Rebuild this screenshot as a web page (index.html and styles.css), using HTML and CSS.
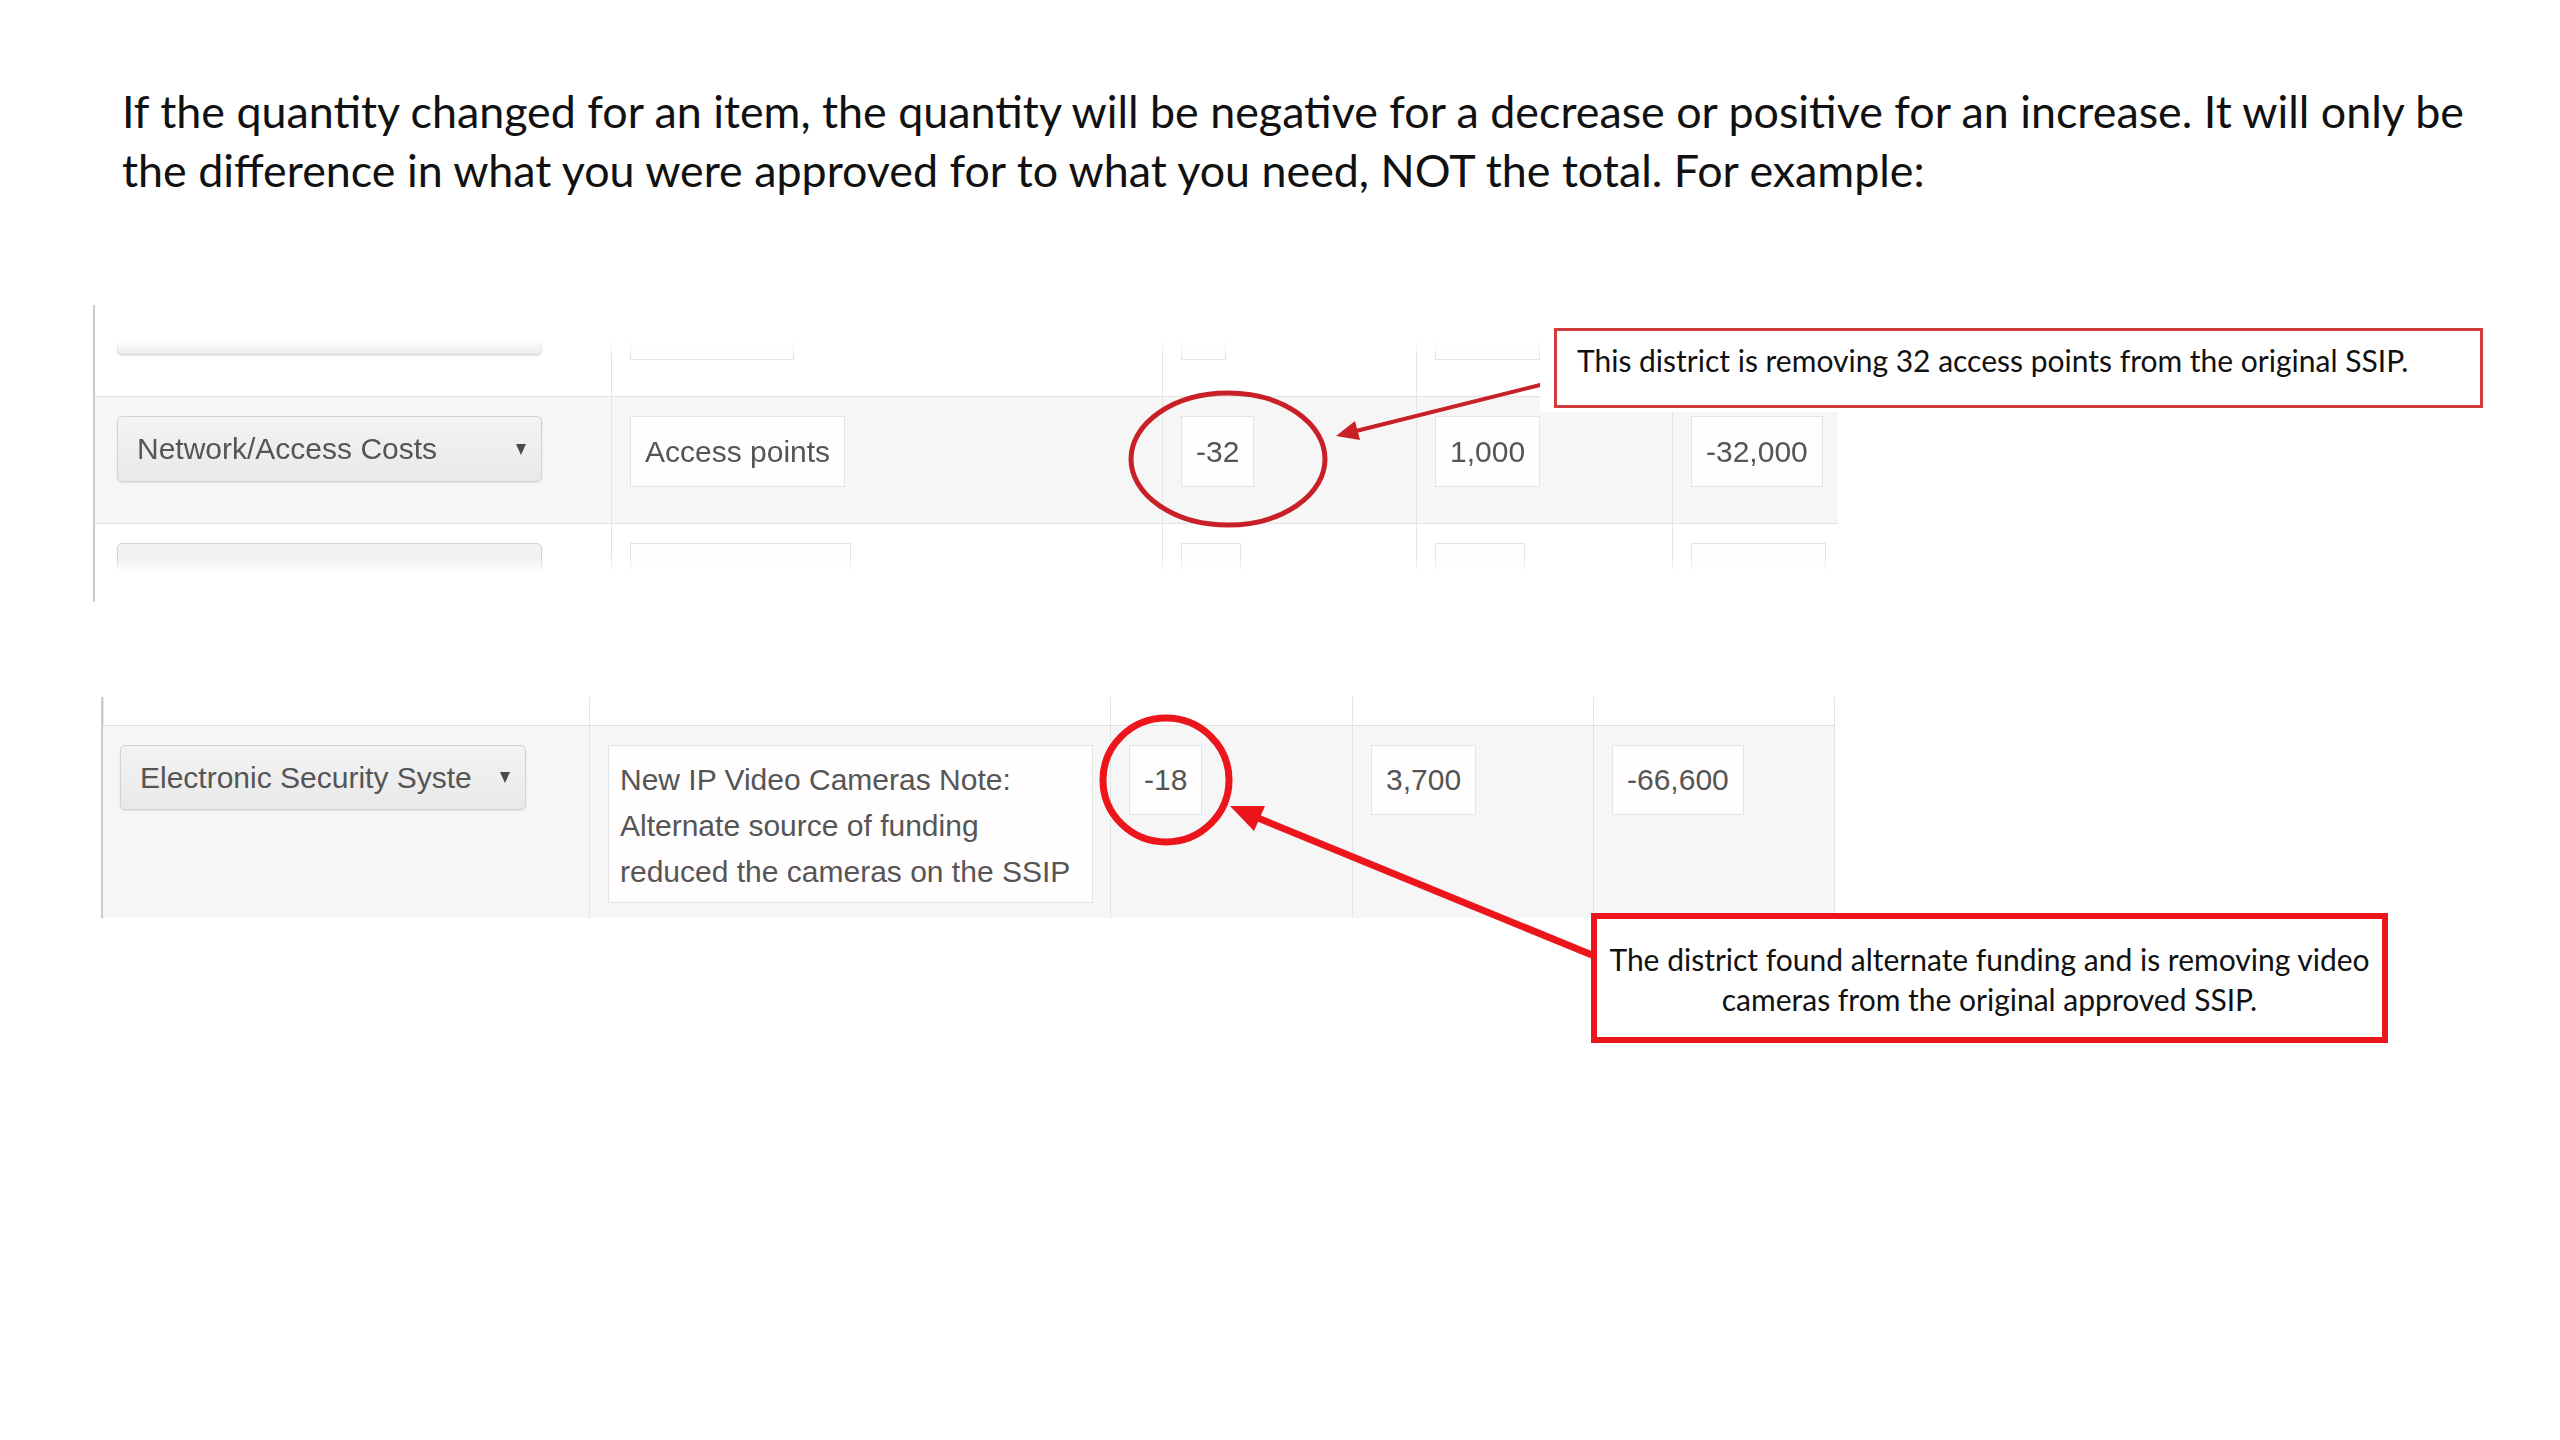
FILE: index.html
```html
<!DOCTYPE html>
<html lang="en">
<head>
    <meta charset="UTF-8">
    <meta name="viewport" content="width=device-width, initial-scale=1.0">
    <title>Quantity changes</title>
    <link rel="stylesheet" href="styles.css">
</head>
<body>
    <div class="slide">
        <p class="intro">If the quantity changed for an item, the quantity will be negative for a decrease or positive for an increase. It will only be<br>the difference in what you were approved for to what you need, NOT the total. For example:</p>

        <!-- first screenshot: access points -->
        <div class="shot shot-one">
            <div class="clip">
                <div class="rows">
                    <div class="row">
                        <div class="cell c1"><div class="select"></div></div>
                        <div class="cell"><div class="field w164"></div></div>
                        <div class="cell"><div class="field w45"></div></div>
                        <div class="cell"><div class="field w105"></div></div>
                        <div class="cell"><div class="field w135"></div></div>
                    </div>
                    <div class="row active">
                        <div class="cell c1"><div class="select"><span class="select-text">Network/Access Costs</span><i class="caret"></i></div></div>
                        <div class="cell"><div class="field">Access points</div></div>
                        <div class="cell"><div class="field">-32</div></div>
                        <div class="cell"><div class="field">1,000</div></div>
                        <div class="cell"><div class="field">-32,000</div></div>
                    </div>
                    <div class="row">
                        <div class="cell c1"><div class="select"></div></div>
                        <div class="cell"><div class="field w221"></div></div>
                        <div class="cell"><div class="field w60"></div></div>
                        <div class="cell"><div class="field w90"></div></div>
                        <div class="cell"><div class="field w135"></div></div>
                    </div>
                </div>
            </div>
        </div>

        <!-- second screenshot: video cameras -->
        <div class="shot shot-two">
            <div class="row head">
                <div class="cell"></div>
                <div class="cell"></div>
                <div class="cell"></div>
                <div class="cell"></div>
                <div class="cell"></div>
            </div>
            <div class="row active">
                <div class="cell c1"><div class="select"><span class="select-text">Electronic Security Syste</span><i class="caret"></i></div></div>
                <div class="cell"><div class="note-field">New IP Video Cameras Note:<br>Alternate source of funding<br>reduced the cameras on the SSIP</div></div>
                <div class="cell"><div class="field">-18</div></div>
                <div class="cell"><div class="field">3,700</div></div>
                <div class="cell"><div class="field">-66,600</div></div>
            </div>
        </div>

        <!-- annotations -->
        <svg class="marks" width="2560" height="1440" viewBox="0 0 2560 1440">
            <ellipse cx="1228" cy="459" rx="97" ry="66" fill="none" stroke="#c91f26" stroke-width="5"/>
            <line x1="1548" y1="383" x2="1356" y2="431" stroke="#c91f26" stroke-width="4"/>
            <polygon points="1336,436 1360,440 1355,421" fill="#c91f26"/>

            <ellipse cx="1166" cy="780" rx="63" ry="62" fill="none" stroke="#ec151c" stroke-width="7"/>
            <line x1="1592" y1="955" x2="1258" y2="818" stroke="#ec151c" stroke-width="7"/>
            <polygon points="1230,806 1265,806 1254,831" fill="#ec151c"/>
        </svg>

        <div class="callout callout-one">
            <div class="callout-box">This district is removing 32 access points from the original SSIP.</div>
        </div>
        <div class="callout-two">The district found alternate funding and is removing video<br>cameras from the original approved SSIP.</div>
    </div>
</body>
</html>
```

FILE: styles.css
```css
body {
    margin: 0;
    padding: 0;
    background: #fff;
}
.slide {
    position: relative;
    width: 2560px;
    height: 1440px;
    overflow: hidden;
    font-family: Lato, "Open Sans", sans-serif;
    color: #111;
}
.intro {
    margin: 0;
    padding: 82px 0 0 122px;
    font-size: 44.8px;
    line-height: 59px;
    white-space: nowrap;
}

/* screenshots */
.shot {
    font-family: "Liberation Sans", Arial, sans-serif;
    font-size: 30px;
    color: #555;
    border-left: 2px solid #cbcbcb;
}
.row {
    display: grid;
    box-sizing: border-box;
}
.cell {
    box-sizing: border-box;
    border-left: 1px solid #e4e4e4;
    padding: 19px 0 0 18px;
}
.cell.c1 {
    border-left: none;
}
.row.active {
    background: #f6f6f6;
}

.shot-one {
    width: 1743px;
    margin: 105px 0 0 93px;
    padding: 35px 0 30px 0;
}
.clip {
    height: 232px;
    overflow: hidden;
    -webkit-mask-image: linear-gradient(to bottom, transparent 0, #000 16px, #000 calc(100% - 14px), transparent 100%);
    mask-image: linear-gradient(to bottom, transparent 0, #000 16px, #000 calc(100% - 14px), transparent 100%);
}
.rows {
    margin-top: -71px;
}
.shot-one .row {
    grid-template-columns: 516px 551px 254px 256px 166px;
    height: 127px;
    border-top: 1px solid #e2e2e2;
}
.shot-one .cell.c1 {
    padding-left: 22px;
}
.shot-one .select {
    width: 425px;
    height: 66px;
}

.shot-two {
    width: 1732px;
    margin: 95px 0 0 101px;
}
.shot-two .row {
    grid-template-columns: 486px 521px 242px 241px 242px;
}
.shot-two .row.head {
    height: 28px;
}
.shot-two .row.active {
    height: 193px;
    border-top: 1px solid #e0e0e0;
}
.shot-two .cell:last-child {
    border-right: 1px solid #e4e4e4;
}
.shot-two .cell.c1 {
    padding-left: 17px;
}
.shot-two .select {
    width: 406px;
    height: 65px;
}
.shot-two .field {
    height: 70px;
}

/* form controls */
.select {
    box-sizing: border-box;
    display: flex;
    align-items: center;
    justify-content: space-between;
    padding: 0 15px 0 19px;
    border: 1px solid #d2d2d2;
    border-radius: 5px;
    background: linear-gradient(#f3f3f3, #e9e9e9);
    box-shadow: 0 1px 2px rgba(0, 0, 0, 0.1);
}
.select-text {
    white-space: nowrap;
}
.caret {
    width: 0;
    height: 0;
    border-left: 5px solid transparent;
    border-right: 5px solid transparent;
    border-top: 11px solid #4a4a4a;
}
.field {
    box-sizing: border-box;
    display: inline-flex;
    align-items: center;
    height: 71px;
    padding: 0 14px;
    border: 1px solid #e4e4e4;
    background: #fffdfd;
    white-space: nowrap;
}
.w45 { width: 45px; }
.w60 { width: 60px; }
.w90 { width: 90px; }
.w105 { width: 105px; }
.w135 { width: 135px; }
.w164 { width: 164px; }
.w221 { width: 221px; }

.note-field {
    box-sizing: border-box;
    width: 485px;
    height: 158px;
    padding: 11px 0 0 11px;
    border: 1px solid #e4e4e4;
    background: #fffdfd;
    line-height: 46px;
    white-space: nowrap;
}

/* annotations */
.marks {
    position: absolute;
    left: 0;
    top: 0;
    pointer-events: none;
}
.callout-one {
    position: absolute;
    left: 1540px;
    top: 303px;
    padding: 25px 14px 4px 14px;
    background: #fff;
}
.callout-box {
    box-sizing: border-box;
    width: 929px;
    height: 80px;
    padding: 10px 0 0 20px;
    border: 3px solid #d03b3b;
    font-size: 30px;
    line-height: 38px;
    white-space: nowrap;
}
.callout-two {
    position: absolute;
    left: 1591px;
    top: 913px;
    box-sizing: border-box;
    width: 797px;
    height: 130px;
    padding: 20px 0 0 0;
    border: 6px solid #ec151c;
    background: #fff;
    text-align: center;
    font-size: 30px;
    line-height: 40px;
    white-space: nowrap;
}
```
